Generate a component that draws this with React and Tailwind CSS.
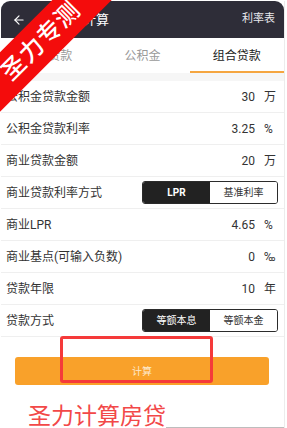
import { ArrowLeft } from 'lucide-react'

const ROWS = [
  { label: '公积金贷款金额', value: '30', unit: '万' },
  { label: '公积金贷款利率', value: '3.25', unit: '%' },
  { label: '商业贷款金额', value: '20', unit: '万' },
  { label: '商业贷款利率方式', toggle: ['LPR', '基准利率'], bold: true },
  { label: '商业LPR', value: '4.65', unit: '%' },
  { label: '商业基点(可输入负数)', value: '0', unit: '‰' },
  { label: '贷款年限', value: '10', unit: '年' },
  { label: '贷款方式', toggle: ['等额本息', '等额本金'] },
]

const TABS = ['商业贷款', '公积金', '组合贷款']

function Toggle({ items, bold }) {
  return (
    <div className="flex h-[23px] w-[136px] overflow-hidden rounded-[3px] border border-[#2b2b2b] text-[10px]">
      <div className={`flex flex-1 items-center justify-center bg-[#222222] text-white ${bold ? 'font-bold' : ''}`}>
        {items[0]}
      </div>
      <div className="flex flex-1 items-center justify-center bg-white text-[#333]">
        {items[1]}
      </div>
    </div>
  )
}

export default function App() {
  return (
    <div
      className="relative h-[428px] w-[287px] overflow-hidden bg-white"
      style={{ fontFamily: 'Roboto, "Noto Sans CJK SC", sans-serif' }}
    >
      <div className="ml-[1px] mt-[1px] w-[284px] border-r border-[#ececec]">
        {/* Header */}
        <div className="flex h-[37px] items-center rounded-t-[9px] bg-[#2e2d38] pl-[11px] pr-[9px] text-white">
          <ArrowLeft className="h-[14px] w-[14px]" strokeWidth={2} />
          <span className="ml-[31px] text-[13px]">房贷计算</span>
          <span className="ml-auto text-[11px] text-[#e8e8ec]">利率表</span>
        </div>

        {/* Tabs */}
        <div className="flex h-[35px] bg-white">
          {TABS.map((t, i) => (
            <div
              key={t}
              className={`flex flex-1 items-center justify-center text-[12px] ${
                i === 2 ? 'border-b-2 border-[#f5a640] pt-[2px] text-[#222]' : 'text-[#9a9a9a]'
              }`}
            >
              {t}
            </div>
          ))}
        </div>
        <div className="h-[8px] bg-[#f6f6f6]" />

        {/* Rows */}
        {ROWS.map((r) => (
          <div
            key={r.label}
            className="flex h-[32px] items-center border-b border-[#efefef] pl-[5px] pr-[6px] text-[12px] text-[#333]"
          >
            <span>{r.label}</span>
            <div className="ml-auto flex items-center">
              {r.toggle ? (
                <Toggle items={r.toggle} bold={r.bold} />
              ) : (
                <>
                  <span>{r.value}</span>
                  <span className="ml-[9px] w-[14px] text-left">{r.unit}</span>
                </>
              )}
            </div>
          </div>
        ))}

        {/* Button */}
        <div className="px-[14px] pt-[20px]">
          <button className="flex h-[28px] w-[254px] items-center justify-center rounded-[3px] bg-[#f9a12a] text-[10px] text-[#fde9cc]">
            计算
          </button>
        </div>

        {/* Annotation text */}
        <div className="mt-[20px] flex items-end pl-[27px]">
          <span className="text-[23px] leading-[24px] text-[#f24848]">圣力计算房贷</span>
          <div className="mb-[1px] flex-1 border-b border-[#bdbdbd]" />
        </div>
      </div>

      {/* Red annotation box */}
      <div className="absolute left-[60px] top-[336px] h-[47px] w-[153px] rounded-[3px] border-[3px] border-[#f53a3a]" />

      {/* Ribbon */}
      <div className="absolute left-[-59px] top-[20px] flex h-[42px] w-[200px] -rotate-45 items-center justify-center bg-[#f40c0c] text-[24px] font-medium tracking-[1px] text-white">
        圣力专测
      </div>
    </div>
  )
}
